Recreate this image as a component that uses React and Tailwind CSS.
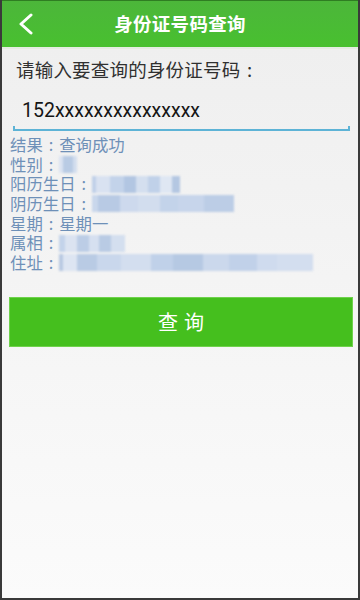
import React from 'react';

const font = { fontFamily: '"Noto Sans CJK SC", "Noto Sans", sans-serif' };

// mosaic used to hide personal data
const Mosaic = ({ cells }) => (
  <span className="inline-flex h-[17px] items-stretch blur-[1.2px]">
    {cells.map((c, i) => (
      <span key={i} className="h-full" style={{ width: c[0], background: c[1] }} />
    ))}
  </span>
);

const Colon = () => <span className="inline-block w-[1em] text-center">:</span>;

const rows = [
  { k: '结果', v: '查询成功' },
  { k: '性别', m: [[4, '#dbe3f1'], [10, '#b9cbe4'], [4, '#d3deee']] },
  { k: '阳历生日', m: [[4, '#c0d0e8'], [14, '#d9e2f1'], [14, '#c3d3ea'], [12, '#b2c6e2'], [12, '#d4dfef'], [12, '#c0d1e9'], [12, '#dfe7f3'], [8, '#b4c7e2']] },
  { k: '阴历生日', m: [[6, '#c9d7ec'], [22, '#b8cae4'], [18, '#cdd9ed'], [22, '#d2ddee'], [18, '#c3d3ea'], [26, '#c7d5eb'], [30, '#bccde6']] },
  { k: '星期', v: '星期一' },
  { k: '属相', m: [[6, '#c3d3ea'], [12, '#dbe3f1'], [12, '#bccde6'], [10, '#d6e0f0'], [12, '#b9cbe4'], [14, '#d4dfef']] },
  { k: '住址', m: [[4, '#b8c9e2'], [14, '#dde5f2'], [20, '#b9cbe4'], [24, '#c9d7ec'], [30, '#d3deef'], [22, '#c0d1e9'], [30, '#b6c9e3'], [26, '#cbd8ec'], [28, '#c1d1e9'], [20, '#cfdbee'], [36, '#d3deef']] },
];

export default function App() {
  return (
    <div className="w-[360px] h-[600px] overflow-hidden flex flex-col bg-gradient-to-b from-[#eeeeee] to-[#fbfbfb] border-x-2 border-b-2 border-[#3a3a3a]" style={font}>
      <div className="h-[47px] shrink-0 relative flex items-center justify-center bg-gradient-to-b from-[#4cb63a] to-[#48c02f] border-t border-[#2f7d22]">
        <svg className="absolute left-[15px] top-[12px]" width="18" height="22" viewBox="0 0 18 22">
          <path d="M14 2 L4 11 L14 20" fill="none" stroke="#ffffff" strokeWidth="3" strokeLinecap="round" strokeLinejoin="round" />
        </svg>
        <span className="text-white text-[18.5px] font-bold tracking-[0.3px]">身份证号码查询</span>
      </div>
      <div className="h-[2px] bg-[#e4ece2]" />
      <div className="pl-[14px] pt-[8px] text-[18.5px] leading-[25px] text-[#303030] tracking-[0.2px] whitespace-nowrap">
        请输入要查询的身份证号码<Colon />
      </div>
      <div className="ml-[11px] mr-[8px] mt-[17px] relative">
        <div className="pl-[9px] text-[19.5px] leading-[24px] text-[#151515]" style={{ fontFamily: 'Roboto, "Noto Sans", sans-serif' }}>152xxxxxxxxxxxxxxx</div>
        <div className="mt-[3px] h-[5px] border-x-2 border-b-2 border-[#5db3d6]" />
      </div>
      <div className="pl-[8px] mt-[4px] text-[16.4px] leading-[19.7px] text-[#6e90b8]">
        {rows.map((r) => (
          <div key={r.k} className="flex items-center h-[19.7px] whitespace-nowrap">
            <span>{r.k}</span>
            <Colon />
            {r.v ? <span>{r.v}</span> : <Mosaic cells={r.m} />}
          </div>
        ))}
      </div>
      <button className="ml-[7px] mr-[5px] mt-[24px] h-[50px] shrink-0 bg-[#45bf1e] border border-[#6fd24c] text-white text-[20px] tracking-[6px] pl-[6px]">
        查询
      </button>
    </div>
  );
}
